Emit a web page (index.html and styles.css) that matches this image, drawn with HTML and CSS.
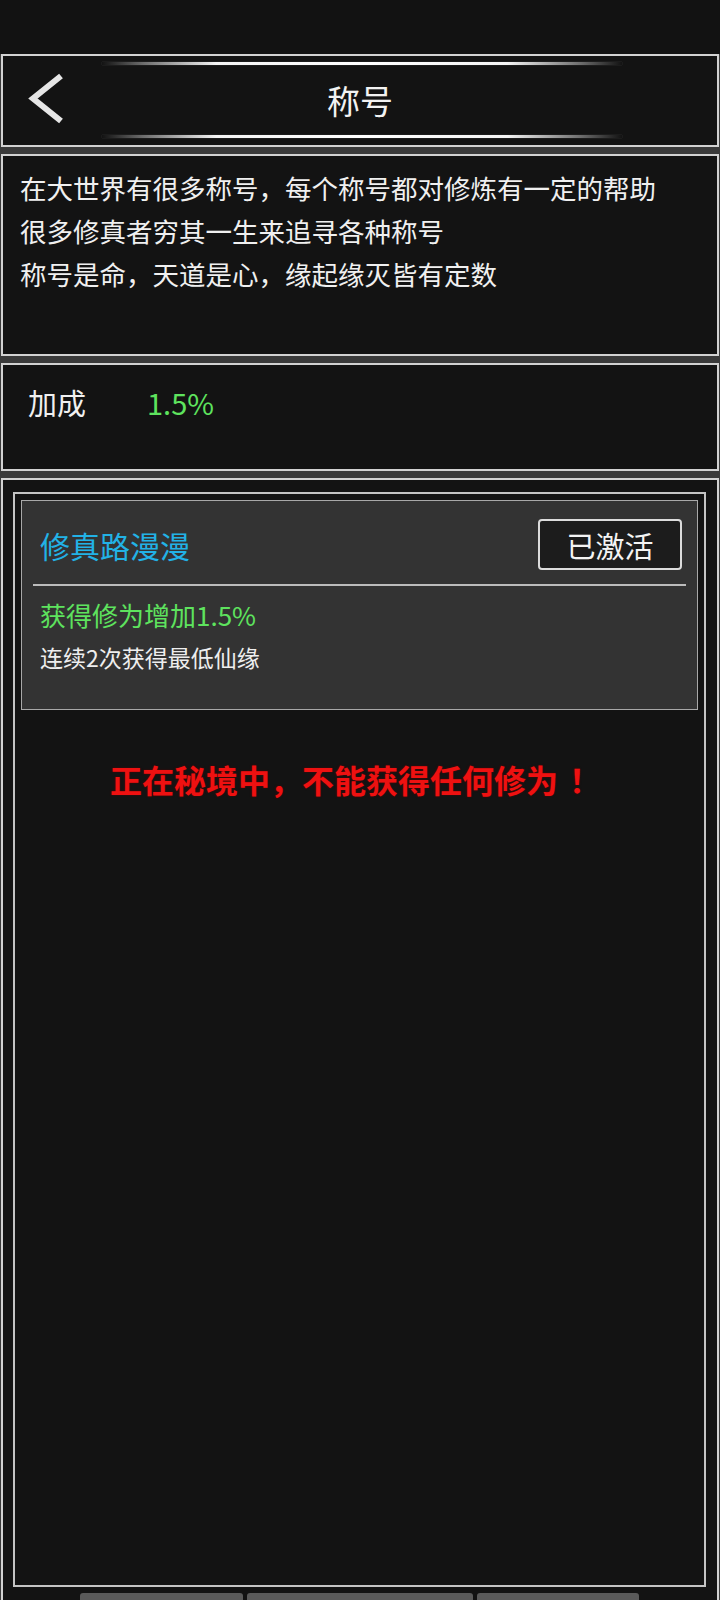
FILE: index.html
```html
<!DOCTYPE html>
<html lang="zh-CN">
<head>
<meta charset="utf-8">
<title>称号</title>
<link rel="stylesheet" href="styles.css">
</head>
<body>
<div class="page">
  <div class="status"></div>
  <div class="stack">
    <header class="box header">
      <div class="deco"></div>
      <div class="header-row">
        <div class="back">
          <svg width="40" height="54" viewBox="0 0 40 54"><polyline points="34,3 6,25.5 34,48" fill="none" stroke="#e6e6e6" stroke-width="6"/></svg>
        </div>
        <div class="title">称号</div>
        <div></div>
      </div>
      <div class="deco"></div>
    </header>

    <section class="box desc">
      <p>在大世界有很多称号，每个称号都对修炼有一定的帮助</p>
      <p>很多修真者穷其一生来追寻各种称号</p>
      <p>称号是命，天道是心，缘起缘灭皆有定数</p>
    </section>

    <section class="box bonus">
      <span class="bonus-label">加成</span>
      <span class="bonus-value">1.5%</span>
    </section>

    <section class="box main">
      <div class="list">
        <div class="card">
          <div class="card-head">
            <span class="card-title">修真路漫漫</span>
            <span class="card-btn">已激活</span>
          </div>
          <div class="card-divider"></div>
          <div class="card-effect">获得修为增加1.5%</div>
          <div class="card-cond">连续2次获得最低仙缘</div>
        </div>
        <div class="warning">正在秘境中，不能获得任何修为<span class="bang">！</span></div>
      </div>
      <div class="tabs">
        <span class="tab t1"></span>
        <span class="tab t2"></span>
        <span class="tab t3"></span>
      </div>
    </section>
  </div>
</div>
</body>
</html>
```

FILE: styles.css
```css
* { box-sizing: border-box; }
html, body {
  margin: 0;
  padding: 0;
  background: #121212;
}
body {
  width: 720px;
  height: 1600px;
  overflow: hidden;
  font-family: "Noto Sans CJK SC", "Noto Sans", sans-serif;
  color: #f0f0f0;
  text-spacing-trim: space-all;
}
.page {
  width: 720px;
  height: 1600px;
  display: flex;
  flex-direction: column;
}
.status {
  height: 54px;
  flex: none;
  background: #121212;
}
.stack {
  flex: 1;
  display: flex;
  flex-direction: column;
  gap: 7px;
  background: #3a3a3a;
  overflow: hidden;
}
.box {
  margin: 0 1px;
  border: 2px solid #d2d2d2;
  background: #131313;
  flex: none;
}

/* header */
.header {
  height: 93px;
  display: flex;
  flex-direction: column;
  align-items: center;
  padding-top: 6px;
}
.deco {
  width: 520px;
  height: 3px;
  margin-left: 4px;
  background: linear-gradient(90deg, rgba(255,255,255,0) 0%, rgba(200,200,200,0.5) 8%, #f4f4f4 22%, #ffffff 50%, #f4f4f4 78%, rgba(200,200,200,0.5) 92%, rgba(255,255,255,0) 100%);
  box-shadow: 0 0 1px rgba(255,255,255,0.4);
}
.header-row {
  width: 100%;
  height: 70px;
  display: grid;
  grid-template-columns: 1fr auto 1fr;
  align-items: center;
}
.back {
  padding-left: 24px;
  display: flex;
  align-items: center;
}
.back svg { display: block; }
.title {
  font-size: 33px;
  line-height: 40px;
  color: #f2f2f2;
}

/* description */
.desc {
  height: 202px;
  padding: 10px 0 0 17px;
}
.desc p {
  margin: 0;
  font-size: 26.5px;
  line-height: 43px;
  color: #f0f0f0;
  white-space: nowrap;
}

/* bonus */
.bonus {
  height: 108px;
  padding: 17px 0 0 25px;
  display: flex;
  align-items: flex-start;
  line-height: 40px;
}
.bonus-label {
  font-size: 29px;
  color: #f0f0f0;
  width: 119px;
}
.bonus-value {
  font-size: 29px;
  color: #5ee35e;
}

/* main */
.main {
  flex: 1;
  padding: 12px 11px 0 10px;
  display: flex;
  flex-direction: column;
  border-bottom: none;
}
.list {
  height: 1095px;
  border: 2px solid #c4c4c4;
  padding: 6px 6px 0 6px;
  display: flex;
  flex-direction: column;
}
.card {
  background: #333333;
  border: 1px solid #a8a8a8;
  padding: 18px 11px 36px 11px;
}
.card-head {
  display: flex;
  justify-content: space-between;
  align-items: center;
  padding: 0 4px 0 7px;
}
.card-title {
  font-size: 30px;
  line-height: 40px;
  color: #22b2e6;
}
.card-btn {
  width: 144px;
  height: 51px;
  border: 2px solid #dcdcdc;
  border-radius: 4px;
  background: #1c1c1c;
  color: #f4f4f4;
  font-size: 29px;
  display: flex;
  align-items: center;
  justify-content: center;
}
.card-divider {
  height: 2px;
  background: #bcbcbc;
  margin-top: 14px;
}
.card-effect {
  margin-top: 11px;
  padding-left: 7px;
  font-size: 26px;
  line-height: 36px;
  color: #5ee35e;
}
.card-cond {
  margin-top: 8px;
  padding-left: 7px;
  font-size: 23px;
  line-height: 32px;
  color: #eeeeee;
}
.warning {
  margin-top: 50px;
  padding-left: 89px;
  font-size: 32px;
  font-weight: 700;
  line-height: 38px;
  color: #ee1111;
  text-shadow: 0 0 2px #5a0000;
  white-space: nowrap;
}
.bang {
  display: inline-block;
  width: 32px;
  margin-left: 11px;
  text-align: center;
}
.tabs {
  margin-top: 6px;
  display: flex;
  gap: 4px;
  padding-left: 67px;
}
.tab {
  display: block;
  height: 8px;
  background: #5a5a5a;
  border-radius: 3px 3px 0 0;
}
.t1 { width: 163px; }
.t2 { width: 226px; }
.t3 { width: 162px; }
```
